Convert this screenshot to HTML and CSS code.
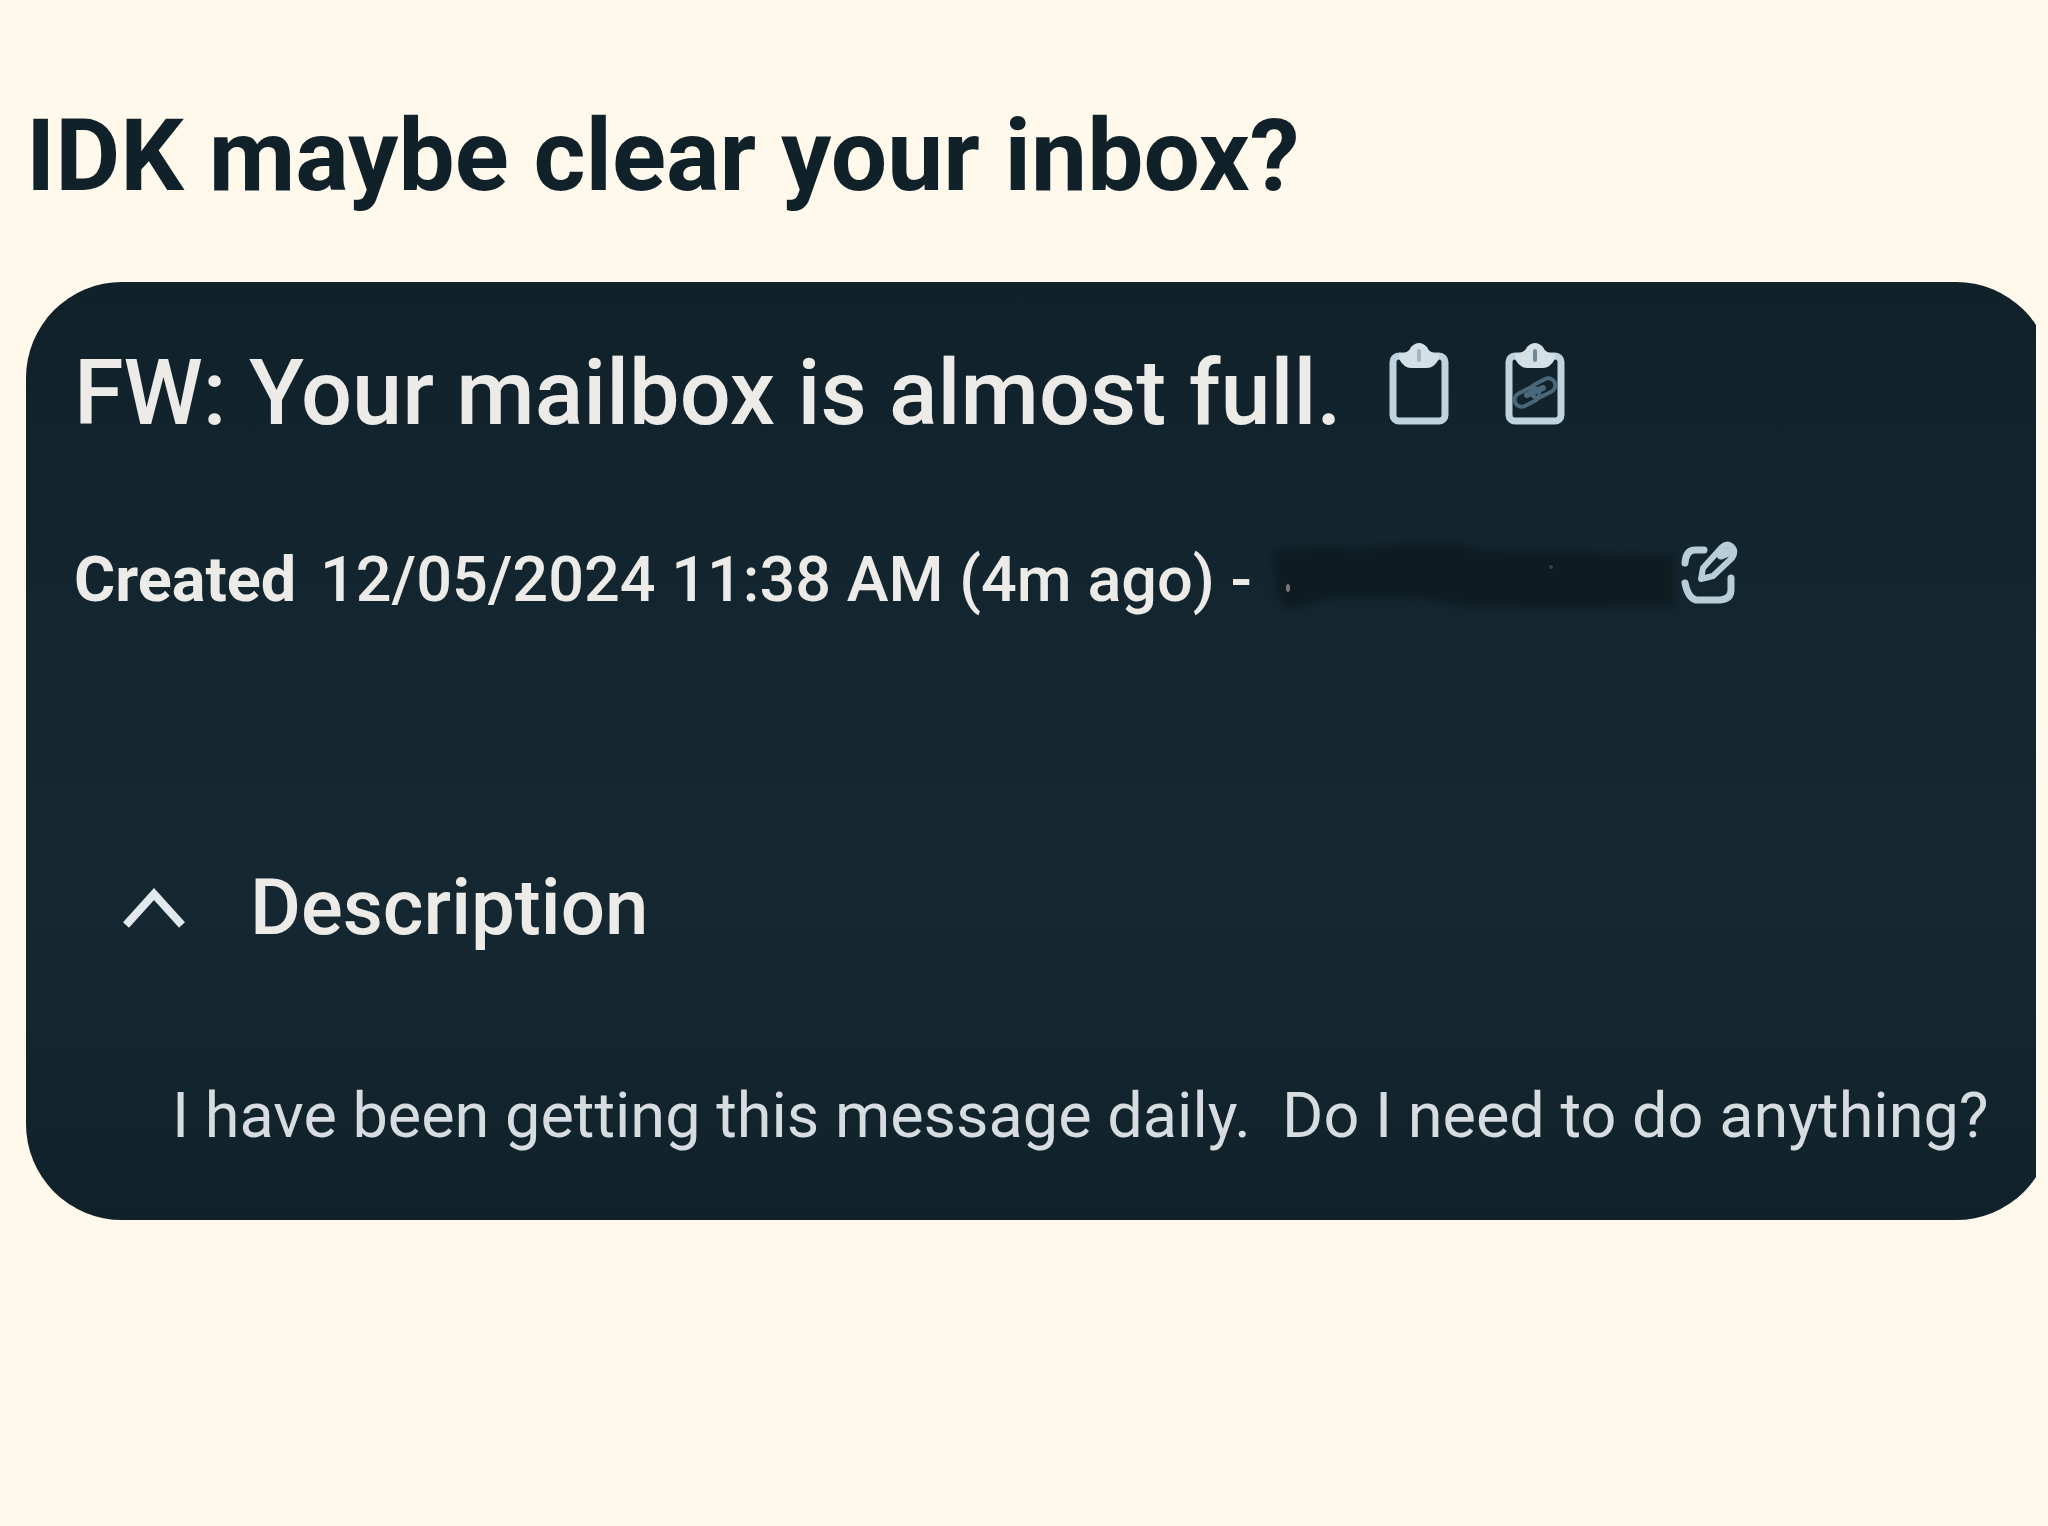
FILE: index.html
```html
<!DOCTYPE html>
<html lang="en">
<head>
<meta charset="utf-8">
<title>IDK maybe clear your inbox?</title>
<link rel="stylesheet" href="styles.css">
</head>
<body>
<main class="page">
  <h1 class="page-title">IDK maybe clear your inbox?</h1>
  <div class="card-frame">
    <article class="card">
      <header class="ticket-header">
        <div class="subject-row">
          <h2 class="subject">FW: Your mailbox is almost full.</h2>
          <div class="actions">
            <button class="icon-button" type="button" aria-label="Copy">
              <svg class="clipboard" viewBox="0 0 60 84" aria-hidden="true">
                <rect x="4" y="14" width="52" height="65" rx="6" fill="none" stroke="#bfd3df" stroke-width="7"/>
                <path d="M10 12 Q20 11 22 5 Q30 -3 38 5 Q40 11 50 12 V17 Q45 26 38 26 H22 Q15 26 10 17Z" fill="#d3e0e6"/>
                <path d="M30 9V18" stroke="#a3b5be" stroke-width="4" stroke-linecap="round"/>
              </svg>
            </button>
            <button class="icon-button" type="button" aria-label="Copy link">
              <svg class="clipboard" viewBox="0 0 60 84" aria-hidden="true">
                <rect x="4" y="14" width="52" height="65" rx="6" fill="none" stroke="#bfd3df" stroke-width="7"/>
                <path d="M10 12 Q20 11 22 5 Q30 -3 38 5 Q40 11 50 12 V17 Q45 26 38 26 H22 Q15 26 10 17Z" fill="#d3e0e6"/>
                <path d="M30 9V18" stroke="#6f8796" stroke-width="4" stroke-linecap="round"/>
                <g fill="none" stroke="#4b687b" stroke-width="4" stroke-linecap="round">
                  <rect x="9" y="48" width="26" height="14" rx="7" transform="rotate(-27 22 55)"/>
                  <rect x="25" y="39" width="26" height="14" rx="7" transform="rotate(-27 38 46)"/>
                  <path d="M22 53L38 46" stroke-width="6"/>
                </g>
              </svg>
            </button>
          </div>
        </div>
        <div class="meta-row">
          <p class="meta"><strong class="meta-label">Created</strong> <time datetime="2024-12-05T11:38">12/05/2024 11:38 AM (4m ago)</time> -</p>
          <svg class="redacted" viewBox="0 0 412 72" aria-hidden="true">
            <path class="redacted-ink" d="M4 10L60 6L90 9L130 4L190 3L210 10L300 12L406 15V66L290 68L200 66L150 58L60 58L20 70L10 58Z"/>
            <ellipse cx="20" cy="48" rx="2" ry="4" fill="#76777a"/>
            <circle cx="283" cy="27" r="2" fill="#33424a"/>
          </svg>
          <button class="icon-button" type="button" aria-label="Edit">
            <svg class="edit" viewBox="0 0 58 64" aria-hidden="true">
              <g fill="none" stroke="#b9cdd8" stroke-linecap="round" stroke-linejoin="round">
                <path d="M5 23Q6 10 15 10H24M5 43Q8 58 16 60H40Q51 59 51 50V38" stroke-width="7"/>
                <path d="M21 39L23 28L42 7Q48 2 53 8Q56 12 52 18L33 36Z" stroke-width="6"/>
                <path d="M41 15L48 12" stroke-width="9"/>
              </g>
            </svg>
          </button>
        </div>
      </header>
      <section class="description">
        <button class="section-toggle" type="button" aria-expanded="true" aria-controls="description-text">
          <svg class="chevron" viewBox="0 0 64 44" aria-hidden="true">
            <path d="M4 39L32 8L60 39" fill="none" stroke="#e2e9ed" stroke-width="8"/>
          </svg>
          <span>Description</span>
        </button>
        <p class="message" id="description-text">I have been getting this message daily.&nbsp; Do I need to do anything?</p>
      </section>
    </article>
  </div>
</main>
</body>
</html>
```
FILE: styles.css
```css
body {
  margin: 0;
  background: #fff9ec;
  color: #10212a;
  font-family: Roboto, "Liberation Sans", sans-serif;
}

.page {
  padding: 92px 12px 0 26px;
}

.page-title {
  margin: 0;
  font-size: 100px;
  line-height: 128px;
  font-weight: 700;
  white-space: nowrap;
}

.card-frame {
  margin-top: 62px;
  overflow: hidden;
}

.card {
  box-sizing: border-box;
  margin-right: -16px;
  padding: 60px 0 64px 48px;
  border-radius: 96px;
  background: linear-gradient(#10212a, #142730 46%, #13252d 51%, #152831 54%, #152831 66%, #10212a);
  color: #ecebe8;
  white-space: nowrap;
}

.subject-row,
.meta-row {
  display: flex;
  align-items: flex-start;
}

.subject-row {
  gap: 48px;
}

.subject {
  margin: 0;
  font-size: 90px;
  line-height: 104px;
  font-weight: 500;
}

.actions {
  display: flex;
  gap: 56px;
}

.icon-button,
.section-toggle {
  padding: 0;
  border: 0;
  background: none;
  color: inherit;
  font: inherit;
  cursor: pointer;
}

.icon-button svg {
  display: block;
}

.clipboard {
  width: 60px;
  height: 84px;
}

.meta-row {
  margin-top: 94px;
}

.meta {
  margin: 0;
  font-size: 63px;
  line-height: 80px;
  font-weight: 500;
}

.meta-label {
  font-weight: 700;
  margin-right: 8px;
}

.redacted {
  width: 412px;
  height: 72px;
  margin-left: 16px;
}

.redacted-ink {
  fill: #0e1c22;
  filter: blur(3px);
}

.edit {
  width: 58px;
  height: 64px;
}

.description {
  margin-top: 240px;
}

.section-toggle {
  display: flex;
  align-items: center;
  gap: 64px;
  margin-left: 48px;
  font-size: 78px;
  line-height: 96px;
  font-weight: 500;
}

.chevron {
  width: 64px;
  height: 44px;
}

.message {
  margin: 120px 0 0 98px;
  color: #d6dcdf;
  font-size: 63px;
  line-height: 80px;
}
```
